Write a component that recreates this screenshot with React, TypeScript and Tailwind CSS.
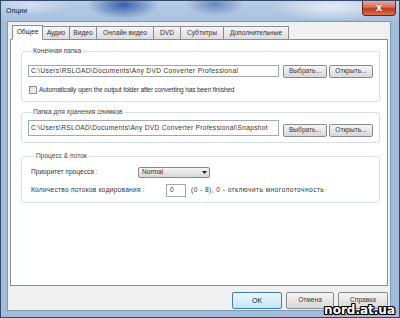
import React from "react";

const tabs = [
  { label: "Общее", w: "w-[31px]", active: true },
  { label: "Аудио", w: "w-[28px]" },
  { label: "Видео", w: "w-[28px]" },
  { label: "Онлайн видео", w: "w-[58px]" },
  { label: "DVD", w: "w-[28px]" },
  { label: "Субтитры", w: "w-[44px]" },
  { label: "Дополнительные", w: "w-[66px]" },
];

function Btn({ children, w }: { children: React.ReactNode; w: string }) {
  return (
    <div
      className={`${w} h-[13px] shrink-0 flex items-center justify-center rounded-[2px] border border-[#8a8a8a] bg-[linear-gradient(#f6f6f6,#e6e6e6_50%,#d8d8d8)] text-[#3a3a3a]`}
    >
      {children}
    </div>
  );
}

function Group({
  title,
  className,
  children,
}: {
  title: string;
  className: string;
  children: React.ReactNode;
}) {
  return (
    <fieldset className={`ml-[10px] mr-[7px] border border-[#d5dfe5] rounded-[3px] ${className}`}>
      <legend className="ml-[4px] px-[1px] leading-[8px] text-[#444]">{title}</legend>
      {children}
    </fieldset>
  );
}

export default function App() {
  return (
    <div className="w-[400px] h-[318px] overflow-hidden relative flex flex-col border border-[#34496a] bg-[#a4bbd7] font-['Liberation_Sans',Arial,sans-serif] text-[6.6px] text-[#333] leading-none">
      {/* title bar */}
      <div className="h-[20px] shrink-0 relative bg-[radial-gradient(36px_14px_at_122px_4px,rgba(50,88,170,0.95),transparent),radial-gradient(30px_12px_at_214px_3px,rgba(70,108,175,0.7),transparent),radial-gradient(60px_14px_at_330px_6px,rgba(235,242,250,0.85),transparent),radial-gradient(40px_10px_at_30px_4px,rgba(230,238,248,0.6),transparent),linear-gradient(#b8cde6,#a9c1dd)]">
        <div className="pl-[5px] pt-[6px] text-[7px] text-[#1a1a1a]">Опции</div>
        <div className="absolute right-[3px] -top-px w-[34px] h-[16px] rounded-b-[3px] border border-[#5a2a24] bg-[linear-gradient(#e9a99c,#d66b56_45%,#c0391f_55%,#d7704f)] flex items-center justify-center">
          <span className="text-white text-[10px] font-bold font-['DejaVu_Sans',sans-serif] [text-shadow:0_0_1px_#6a1a10]">x</span>
        </div>
      </div>
      {/* body */}
      <div className="flex-1 flex pl-[6px] pr-[8px] pb-[6px]">
        <div className="flex-1 flex flex-col bg-[#f0f0f0] border border-[#7f98b8] px-[2px] pt-[2px] pb-px">
          {/* tabs */}
          <div className="h-[15px] shrink-0 flex items-end pl-[2px] relative z-10">
            {tabs.map((t, i) =>
              t.active ? (
                <div
                  key={i}
                  className={`${t.w} h-[15px] -mb-px bg-white border border-[#898c95] border-b-white flex items-center justify-center text-[#222]`}
                >
                  {t.label}
                </div>
              ) : (
                <div
                  key={i}
                  className={`${t.w} h-[13px] -ml-px first:ml-0 bg-[linear-gradient(#f5f5f5,#e8e8e8_50%,#dcdcdc)] border border-[#898c95] border-b-0 flex items-center justify-center text-[#333]`}
                >
                  {t.label}
                </div>
              )
            )}
          </div>
          {/* panel */}
          <div className="flex-1 bg-white border border-[#898c95] flex flex-col">
            <Group title="Конечная папка" className="mt-[7px] px-[6px] pt-[10px] pb-[7px]">
              <div className="flex items-start">
                <div className="w-[251px] h-[12px] border border-[#a0a8b4] bg-white flex items-center pl-[2px] tracking-[0.35px]">
                  C:\Users\RSLOAD\Documents\Any DVD Converter Professional
                </div>
                <div className="ml-[4px]">
                  <Btn w="w-[44px]">Выбрать...</Btn>
                </div>
                <div className="ml-[2px]">
                  <Btn w="w-[44px]">Открыть...</Btn>
                </div>
              </div>
              <div className="mt-[8px] flex items-center pl-[1px]">
                <div className="w-[8px] h-[8px] border border-[#8e8f8f] bg-[linear-gradient(135deg,#dcdcdc,#f6f6f6)]" />
                <span className="ml-[2px] tracking-[-0.15px]">
                  Automatically open the output folder after converting has been finished
                </span>
              </div>
            </Group>
            <Group title="Папка для хранения снимков" className="mt-[6px] px-[6px] pt-[4px] pb-[5px]">
              <div className="flex items-start">
                <div className="w-[251px] h-[16px] border border-[#a0a8b4] bg-white flex items-center pl-[2px] tracking-[0.3px]">
                  C:\Users\RSLOAD\Documents\Any DVD Converter Professional\Snapshot
                </div>
                <div className="ml-[4px] mt-[4px]">
                  <Btn w="w-[44px]">Выбрать...</Btn>
                </div>
                <div className="ml-[2px] mt-[4px]">
                  <Btn w="w-[44px]">Открыть...</Btn>
                </div>
              </div>
            </Group>
            <Group title="Процесс & поток" className="mt-[9px] pl-[9px] pt-[7px] pb-[5px]">
              <div className="flex items-center h-[11px]">
                <span className="w-[107px] shrink-0">Приоритет процесса :</span>
                <div className="w-[72px] h-[11px] border border-[#8a8a8a] rounded-[2px] bg-[linear-gradient(#f4f4f4,#e4e4e4_50%,#d6d6d6)] flex items-center pl-[3px] relative">
                  <span>Normal</span>
                  <div className="absolute right-0 top-0 bottom-0 w-[9px] flex items-center justify-center">
                    <svg width="5" height="3" viewBox="0 0 5 3">
                      <path d="M0 0h5L2.5 3z" fill="#222" />
                    </svg>
                  </div>
                </div>
              </div>
              <div className="flex items-center mt-[6px] h-[13px]">
                <span className="w-[135px] shrink-0 tracking-[0.25px]">Количество потоков кодирования :</span>
                <div className="w-[20px] h-[13px] border border-[#a0a8b4] bg-white flex items-center pl-[3px]">0</div>
                <span className="ml-[5px] tracking-[0.45px]">(0 - 8), 0 - отключить многопоточность</span>
              </div>
            </Group>
          </div>
          {/* buttons */}
          <div className="h-[17px] mt-[6px] shrink-0 flex justify-end gap-[4px] pr-0">
            <div className="w-[50px] h-[17px] rounded-[2px] border border-[#3c7fb1] bg-[linear-gradient(#eaf6fd,#d9f0fc_50%,#bee6fd)] flex items-center justify-center text-[#222] text-[7px]">
              OK
            </div>
            <div className="w-[48px] h-[17px] rounded-[2px] border border-[#8a8a8a] bg-[linear-gradient(#f6f6f6,#e6e6e6_50%,#d8d8d8)] flex items-center justify-center text-[#3a3a3a]">
              Отмена
            </div>
            <div className="w-[50px] h-[17px] rounded-[2px] border border-[#8a8a8a] bg-[linear-gradient(#f6f6f6,#e6e6e6_50%,#d8d8d8)] flex items-center justify-center text-[#3a3a3a]">
              Справка
            </div>
          </div>
        </div>
      </div>
      <div className="absolute right-[4px] bottom-[1px] text-white font-bold text-[12px] leading-none font-['DejaVu_Sans',sans-serif] [text-shadow:1px_0_0_#000,-1px_0_0_#000,0_1px_0_#000,0_-1px_0_#000,1px_1px_0_#000,-1px_-1px_0_#000,1px_-1px_0_#000,-1px_1px_0_#000]">
        nord.at.ua
      </div>
    </div>
  );
}
